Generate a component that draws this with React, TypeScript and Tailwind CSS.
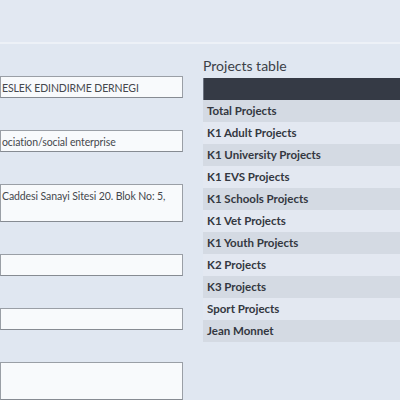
const fields = [
  { value: "ESLEK EDINDIRME DERNEGI", tall: false },
  { value: "ociation/social enterprise", tall: false },
  { value: "Caddesi Sanayi Sitesi 20. Blok No: 5,", tall: true },
  { value: "", tall: false },
  { value: "", tall: false },
  { value: "", tall: true },
];

const projectRows = [
  "Total Projects",
  "K1 Adult Projects",
  "K1 University Projects",
  "K1 EVS Projects",
  "K1 Schools Projects",
  "K1 Vet Projects",
  "K1 Youth Projects",
  "K2 Projects",
  "K3 Projects",
  "Sport Projects",
  "Jean Monnet",
];

export default function App() {
  return (
    <div
      className="w-[400px] h-[400px] overflow-hidden bg-[#e0e7f1] text-[#333842]"
      style={{ fontFamily: 'Lato, "Open Sans", sans-serif' }}
    >
      {/* top bar */}
      <div className="h-[44px] bg-[#e2e8f2] border-b-2 border-[#edf1f7]" />

      <div className="flex gap-[20px]">
        {/* form column */}
        <div className="w-[183px] shrink-0 pt-[32px] flex flex-col gap-[32px]">
          {fields.map((f, i) => (
            <div
              key={i}
              className={
                "bg-[#f8fafc] border border-[#9a9fa6] border-b-[#868b92] pl-[1px] pt-[5px] text-[10.5px] tracking-[-0.1px] leading-[13px] text-[#45484d] whitespace-nowrap overflow-hidden " +
                (f.tall ? "h-[38px]" : "h-[22px]")
              }
            >
              {f.value}
            </div>
          ))}
        </div>

        {/* projects table */}
        <div className="flex-1 pt-[10px]">
          <h2 className="text-[14px] leading-[24px] text-[#3b3f47]">Projects table</h2>
          <div className="h-[22px] bg-[#353a45] border-l border-[#6b7280]" />
          {projectRows.map((name, i) => (
            <div
              key={name}
              className={
                "h-[22px] pl-[4px] flex items-center text-[11.5px] font-bold text-[#333740] " +
                (i % 2 === 0 ? "bg-[#d4dae3]" : "bg-[#e3e8f1]")
              }
            >
              {name}
            </div>
          ))}
        </div>
      </div>
    </div>
  );
}
